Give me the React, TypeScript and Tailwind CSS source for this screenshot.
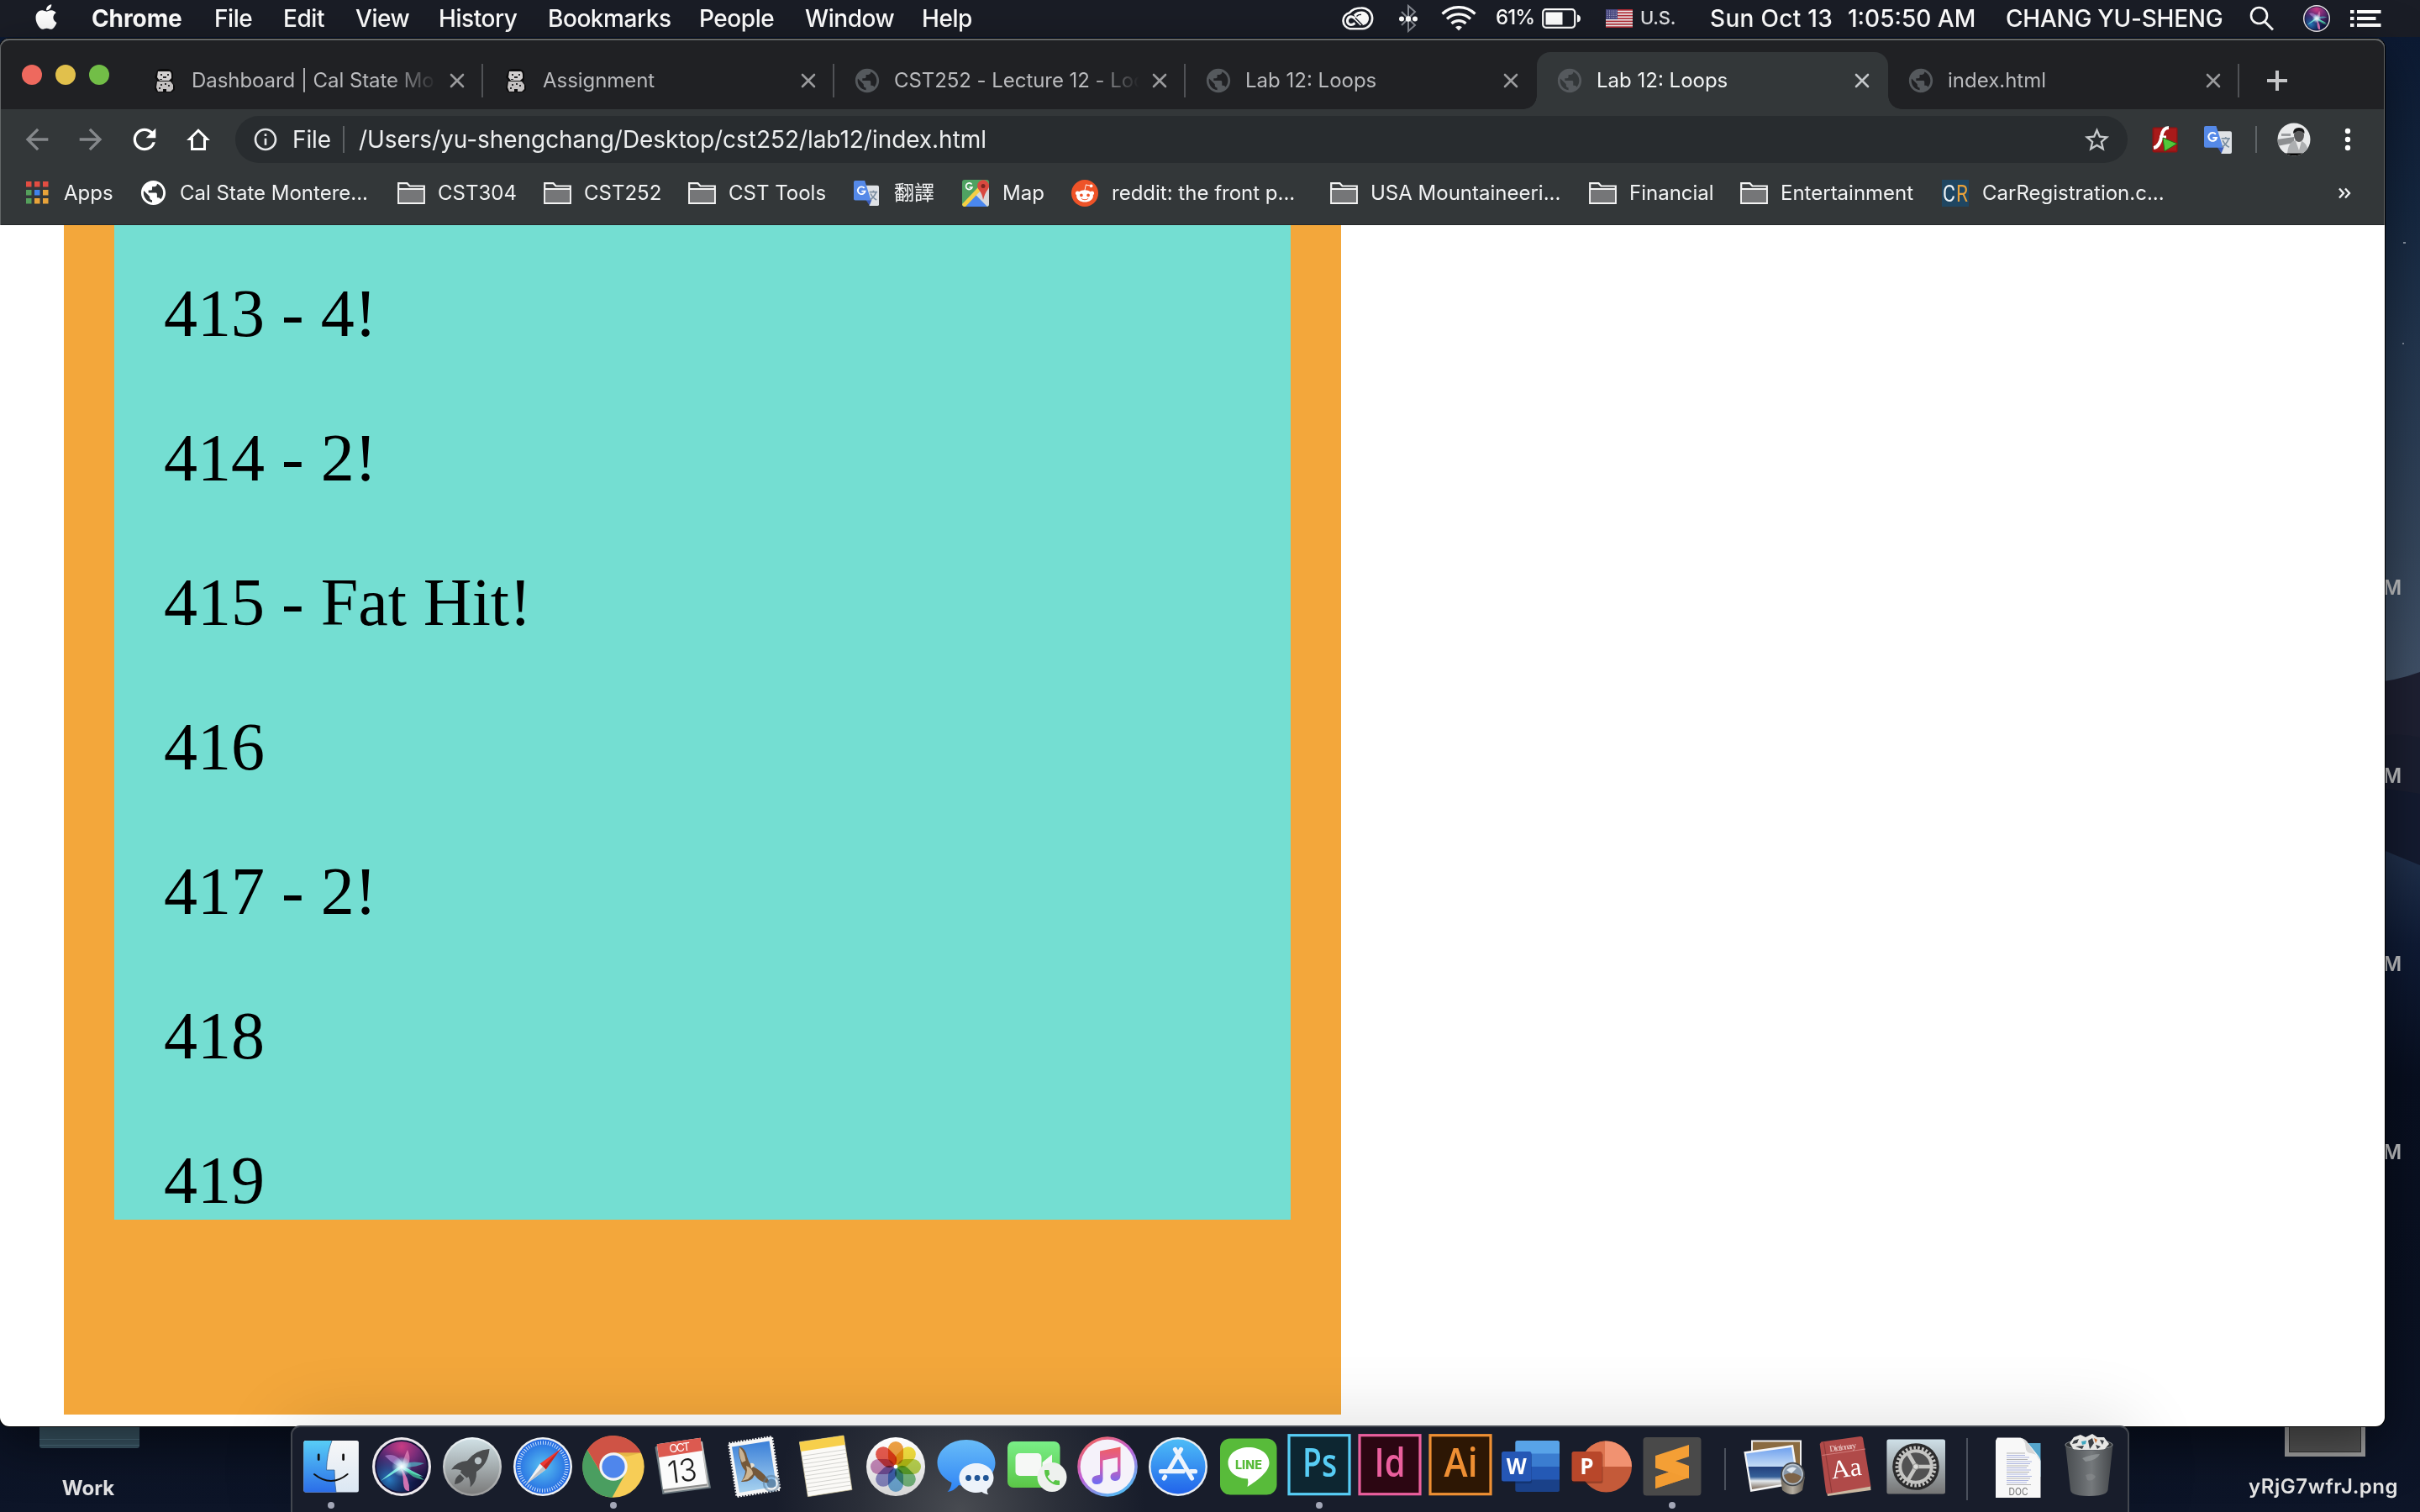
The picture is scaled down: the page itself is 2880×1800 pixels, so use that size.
import type { ReactNode } from "react";
import { FaApple, FaRedditAlien } from "react-icons/fa";
import { MdArrowBack, MdArrowForward, MdPublic, MdRefresh, MdInfoOutline, MdStarBorder, MdPhone } from "react-icons/md";

/* ---------- Menu bar ---------- */

const menus = [
  { label: "Chrome", cls: "w-[146px] font-bold tracking-[-0.1px]" },
  { label: "File", cls: "w-[82px]" },
  { label: "Edit", cls: "w-[86px]" },
  { label: "View", cls: "w-[99px]" },
  { label: "History", cls: "w-[130px]" },
  { label: "Bookmarks", cls: "w-[180px]" },
  { label: "People", cls: "w-[126px]" },
  { label: "Window", cls: "w-[139px]" },
  { label: "Help", cls: "w-[80px]" },
];

function Flag() {
  return (
    <svg width="32" height="22" viewBox="0 0 32 22">
      <rect width="32" height="22" fill="#f3f1f2" />
      {[0, 1, 2, 3, 4, 5, 6].map((i) => (
        <rect key={i} y={i * 3.39} width="32" height="1.7" fill="#b32b35" />
      ))}
      <rect width="14" height="12" fill="#46467f" />
      {[2, 4.6, 7.2, 9.8].map((y) =>
        [2, 4.6, 7.2, 9.8, 12.2].map((x) => <circle key={`${x}-${y}`} cx={x} cy={y} r="0.6" fill="#d8d8ea" />),
      )}
    </svg>
  );
}

function SiriOrb({ size }: { size: number }) {
  return (
    <svg width={size} height={size} viewBox="-35 -35 70 70">
      <SiriArt id={`siri${size}`} />
    </svg>
  );
}

function SiriArt({ id }: { id: string }) {
  return (
    <g>
      <defs>
        <radialGradient id={`${id}a`} cx="0.5" cy="0.1" r="0.75">
          <stop offset="0" stopColor="#c83c84" />
          <stop offset="0.45" stopColor="#732c78" />
          <stop offset="1" stopColor="#10143e" />
        </radialGradient>
        <radialGradient id={`${id}b`} cx="0.25" cy="0.75" r="0.6">
          <stop offset="0" stopColor="#2a7fc4" />
          <stop offset="1" stopColor="#14246a" stopOpacity="0" />
        </radialGradient>
        <radialGradient id={`${id}c`}>
          <stop offset="0" stopColor="#fff" />
          <stop offset="0.4" stopColor="#d9fbff" stopOpacity="0.8" />
          <stop offset="1" stopColor="#9ef" stopOpacity="0" />
        </radialGradient>
      </defs>
      <circle r="35" fill="#ece8ec" />
      <circle r="31.8" fill="#120f34" />
      <circle r="30" fill={`url(#${id}a)`} />
      <circle r="30" fill={`url(#${id}b)`} />
      <path d="M-25 17 Q-10 4 0 -2 Q10 4 26 12 Q8 8 0 2 Q-12 10 -25 17Z" fill="#7cf3e2" opacity="0.9" />
      <path d="M0 -2 Q12 -8 27 -4 Q14 2 0 0Z" fill="#4fb8c8" opacity="0.7" />
      <path d="M-2 0 Q10 14 9 29 Q3 30 2 20 Q2 8 -2 0Z" fill="#f07fc0" opacity="0.85" />
      <path d="M-20 -13 Q-4 -18 4 2 Q-8 0 -20 -13Z" fill="#c79be8" opacity="0.55" />
      <path d="M7 -20 Q13 -6 4 2 Q-2 -2 7 -20Z" fill="#f59ac8" opacity="0.6" />
      <path d="M2 2 Q14 4 27 16 Q12 14 2 2Z" fill="#43d6a0" opacity="0.7" />
      <circle r="12" fill={`url(#${id}c)`} />
    </g>
  );
}

function MenuBar() {
  return (
    <header className="flex h-11 w-full items-center bg-[#1a1d26] pl-[41px] text-[28px] font-medium tracking-[-0.45px] text-white">
      <div className="flex w-[68px] pb-1">
        <FaApple className="h-[34px] w-[28px] text-white" />
      </div>
      {menus.map((m) => (
        <div key={m.label} className={m.cls}>
          {m.label}
        </div>
      ))}
      <div className="ml-[418px] flex w-[69px]">
        <svg width="40" height="28" viewBox="0 0 40 28" fill="none" stroke="#fff">
          <path d="M11.500 26.200 A9.700 9.700 0 0 1 11 7.200 C14.500 2.800 19 1.500 25 1.500 A12.300 12.300 0 0 1 26.500 26.200 Z" strokeWidth="2.600" />
          <path d="M17.500 19.500 C15 21.500 12 21.800 10 20.500 A5.200 5.200 0 0 1 12.500 11.700 C15 11.500 16.500 13 18.500 15 L25 21.500" strokeWidth="3" />
          <path d="M16 9.500 C19 6.300 22 5.500 25 5.500 A8.300 8.300 0 0 1 26.500 22.200 L20 15.500 C18.500 13.500 17.500 11.500 16 9.500Z" fill="#fff" stroke="none" />
          <path d="M19.500 11.500 Q22 8.800 25 9.500 M18 13.300 L26.500 22" stroke="#1a1d26" strokeWidth="1.300" />
        </svg>
      </div>
      <div className="flex w-[51px]">
        <svg width="24" height="34" viewBox="0 0 24 34" fill="none">
          <path d="M4 9 L20 25 L12 32 V2 L20 9 L4 25" stroke="#868a92" strokeWidth="2" />
          <circle cx="4" cy="17.500" r="3" fill="#fff" />
          <circle cx="12" cy="17.500" r="3.200" fill="#fff" />
          <circle cx="20" cy="17.500" r="3" fill="#fff" />
        </svg>
      </div>
      <div className="flex w-[65px]">
        <svg width="42" height="30" viewBox="0 0 42 30" fill="none" stroke="#fff" strokeWidth="3.200">
          <path d="M1.500 9.500 A28 28 0 0 1 40.500 9.500" />
          <path d="M7 15.500 A20 20 0 0 1 35 15.500" />
          <path d="M12.500 21 A12.500 12.500 0 0 1 29.500 21" />
          <path d="M21 29.500 L17 25.300 A6 6 0 0 1 25 25.300 Z" fill="#fff" stroke="none" />
        </svg>
      </div>
      <div className="w-[55px] pb-[2px] text-[24px] tracking-[-0.9px]">61%</div>
      <div className="flex w-[76px]">
        <svg width="47" height="24" viewBox="0 0 47 24">
          <rect x="1.200" y="1.200" width="38" height="21.600" rx="3.500" fill="none" stroke="#fff" strokeWidth="2.200" />
          <rect x="4.500" y="4.500" width="20" height="15" fill="#fff" />
          <path d="M42 7.500 Q46 8 46 12 Q46 16 42 16.500Z" fill="#fff" />
        </svg>
      </div>
      <div className="flex w-[41px]">
        <Flag />
      </div>
      <div className="w-[83px] pb-px text-[22px] tracking-[-0.2px] text-[#dfe0e3]">U.S.</div>
      <div className="w-[164px] whitespace-nowrap tracking-[0.3px]">Sun Oct 13</div>
      <div className="w-[188px] whitespace-nowrap tracking-normal">1:05:50 AM</div>
      <div className="w-[290px] whitespace-nowrap tracking-[-0.25px]">CHANG YU-SHENG</div>
      <div className="flex w-[64px]">
        <svg width="30" height="30" viewBox="0 0 30 30" fill="none" stroke="#fff">
          <circle cx="11.500" cy="11.500" r="9.500" strokeWidth="2.600" />
          <path d="M18 18.500 L28 28.500" strokeWidth="3" />
        </svg>
      </div>
      <div className="flex w-[56px]">
        <SiriOrb size={32} />
      </div>
      <svg width="37" height="22" viewBox="0 0 37 22" fill="#fff">
        <rect y="1" width="4.500" height="4" />
        <rect x="8" y="1" width="28.500" height="4" />
        <rect y="9" width="4.500" height="4" />
        <rect x="8" y="9" width="22.500" height="4" />
        <rect y="17" width="4.500" height="4" />
        <rect x="8" y="17" width="28.500" height="4" />
      </svg>
    </header>
  );
}

/* ---------- Browser window ---------- */

function Otter() {
  return (
    <svg width="28" height="28" viewBox="0 0 28 28">
      <path d="M5 2 Q6 0 10 0 H18 Q23 1 24 5 V12 L23 16 L26 20 V25 L22 28 H5 L2 24 L3 17 L5 14 L2 10Z" fill="#0c0c0d" />
      <path d="M6 3 H20 Q22 4 22 8 V11 L19 14 H8 L5 10Z" fill="#d3d0d0" />
      <path d="M5 15 H21 L24 19 V24 L21 27 H16 V24 H12 V27 H6 L4 22Z" fill="#c4c1c1" />
      <path d="M9 6 h2 v2 h-2z M17 6 h2 v2 h-2z M12 9 h4 v2 h-4z M8 12 h3 v1 h-3z M9 18 h2 v2 h-2z M14 17 h2 v2 h-2z M18 19 h2 v2 h-2z M7 22 h2 v2 h-2z" fill="#29292b" />
    </svg>
  );
}

function CloseX({ active }: { active?: boolean }) {
  return (
    <svg width="18" height="18" viewBox="0 0 18 18" stroke={active ? "#c3c6c9" : "#9a9b9d"} strokeWidth="2.600" strokeLinecap="round">
      <path d="M2 2 L16 16 M16 2 L2 16" />
    </svg>
  );
}

const fade = " [mask-image:linear-gradient(to_right,#000_235px,transparent_292px)]";

const tabs = [
  { title: "Dashboard | Cal State Mo", icon: "otter", cls: "tracking-[-0.06px]" + fade },
  { title: "Assignment", icon: "otter", cls: "tracking-[-0.05px]" },
  { title: "CST252 - Lecture 12 - Loo", icon: "globe", cls: "tracking-[-0.06px]" + fade },
  { title: "Lab 12: Loops", icon: "globe", cls: "" },
  { title: "Lab 12: Loops", icon: "globe", cls: "text-[#f1f3f4]", active: true },
  { title: "index.html", icon: "globe", cls: "" },
];

function TabStrip() {
  return (
    <div className="flex h-[84px] w-full items-end bg-[#202124] text-[24px] text-[#b9babd]">
      <div className="flex h-[84px] w-[157px] items-start gap-4 pl-[26px] pt-[31px]">
        <span className="h-6 w-6 rounded-full bg-[#ee695e]" />
        <span className="h-6 w-6 rounded-full bg-[#e1c04c]" />
        <span className="h-6 w-6 rounded-full bg-[#72be47]" />
      </div>
      {tabs.map((t, i) => (
        <div
          key={i}
          className={
            t.active
              ? "relative flex h-[68px] w-[418px] items-center rounded-t-[16px] bg-[#333739]"
              : "relative flex h-[68px] w-[418px] items-center"
          }
        >
          {t.active && (
            <>
              <span className="absolute -left-4 bottom-0 h-4 w-4 bg-[radial-gradient(circle_at_0_0,transparent_15.5px,#333739_16px)]" />
              <span className="absolute -right-4 bottom-0 h-4 w-4 bg-[radial-gradient(circle_at_100%_0,transparent_15.5px,#333739_16px)]" />
            </>
          )}
          <div className="flex w-[71px] justify-start pl-[22px]">
            {t.icon === "otter" ? <div className="pl-[3px]"><Otter /></div> : <MdPublic className="h-[34px] w-[34px] text-[#55595d]" />}
          </div>
          <div className={"w-[307px] overflow-hidden whitespace-nowrap pb-px " + t.cls}>{t.title}</div>
          <CloseX active={t.active} />
          {!t.active && i !== 3 && <span className="ml-[20px] h-10 w-[2px] bg-[#505256]" />}
        </div>
      ))}
      <div className="flex h-[68px] w-[90px] items-center justify-center">
        <svg width="24" height="24" viewBox="0 0 24 24" stroke="#c4c5c7" strokeWidth="4">
          <path d="M12 0 V24 M0 12 H24" />
        </svg>
      </div>
    </div>
  );
}

function Translate({ size }: { size: number }) {
  return (
    <svg width={size} height={size} viewBox="0 0 32 32">
      <path d="M12 6 H30 Q32 6 32 8 V30 Q32 32 30 32 H20Z" fill="#dfe2e6" />
      <path d="M15 24 H23 L20 31.500Z" fill="#3a5bb8" />
      <path d="M2 0 H14 L22 25 H2 Q0 25 0 23 V2 Q0 0 2 0Z" fill="#5589e8" />
      <path d="M13.500 9.500 A4.700 4.700 0 1 0 14.500 13.500 H10" fill="none" stroke="#fff" strokeWidth="2" />
      <path d="M20 14.500 H30 M25 12.500 V14.500 M28.500 14.500 Q26 21 20.500 24.500 M21.500 16.500 Q24 22 29 24.500" fill="none" stroke="#7c8ea0" strokeWidth="1.700" />
    </svg>
  );
}

function Toolbar() {
  return (
    <div className="flex h-[72px] w-full items-center bg-[#333739] pl-6 text-[28px] text-[#eceeef]">
      <div className="flex w-[64px]"><MdArrowBack className="h-10 w-10 text-[#85888b]" /></div>
      <div className="flex w-[64px]"><MdArrowForward className="h-10 w-10 text-[#85888b]" /></div>
      <div className="flex w-[70px]"><MdRefresh className="h-10 w-10 text-white" /></div>
      <div className="flex w-[58px]">
        <svg width="28" height="28" viewBox="0 0 28 28" fill="none" stroke="#fff" strokeWidth="3">
          <path d="M14 3.300 L24.300 13.500 H21.500 V25.500 H6.500 V13.500 H3.700 Z" />
        </svg>
      </div>
      <div className="flex h-14 w-[2252px] items-center rounded-full bg-[#282c2f] pl-5">
        <div className="flex w-[48px]"><MdInfoOutline className="h-8 w-8 text-[#e4e6e8]" /></div>
        <div className="w-[60px] tracking-[-0.1px]">File</div>
        <div className="mr-[17px] h-8 w-[2px] bg-[#5d6164]" />
        <div className="w-[2051px] whitespace-nowrap tracking-[-0.05px]">/Users/yu-shengchang/Desktop/cst252/lab12/index.html</div>
        <MdStarBorder className="h-[35px] w-[35px] text-[#c6c9cb]" />
      </div>
      <div className="ml-[29px] flex w-[62px]">
        <svg width="32" height="32" viewBox="0 0 32 32">
          <rect x="0.500" y="1.500" width="30" height="30" rx="2" fill="#8f1414" />
          <rect x="2.500" y="3" width="26.500" height="26.500" fill="#a81a1a" />
          <path d="M20 2 Q13 2 11.500 12 Q9 25 2 26" fill="none" stroke="#fff" strokeWidth="4" />
          <path d="M9 13 H17" stroke="#fff" strokeWidth="3" />
          <path d="M13 14 L30 21 L15 30Z" fill="#52c83a" stroke="#1f6d13" strokeWidth="1" />
        </svg>
      </div>
      <div className="flex w-[61px]"><Translate size={33} /></div>
      <div className="h-8 w-[2px] bg-[#5f6467]" />
      <div className="ml-[24px] flex w-[80px]">
        <svg width="40" height="40" viewBox="0 0 40 40">
          <defs><clipPath id="avatar"><circle cx="20" cy="20" r="19.500" /></clipPath></defs>
          <g clipPath="url(#avatar)">
            <rect width="40" height="40" fill="#e9eaeb" />
            <path d="M0 20 L20 17 V24 L0 28Z" fill="#8d8f91" />
            <path d="M5 13 h11 v3 h-11z" fill="#9c9ea0" />
            <path d="M12 40 Q12 22 23 21 Q35 21 37 34 V40Z" fill="#adafb1" />
            <path d="M22 22 L26 33 L29 22Z" fill="#ebebeb" />
            <ellipse cx="26" cy="15" rx="6" ry="8" fill="#5c5c5d" />
            <path d="M19 13 Q19 6 26 6 Q33 6 32.500 13 Q29 9 24 10Z" fill="#161617" />
            <rect y="36.500" width="40" height="4" fill="#060606" />
          </g>
        </svg>
      </div>
      <svg width="8" height="28" viewBox="0 0 8 28" fill="#fff">
        <circle cx="4" cy="4" r="3.200" /><circle cx="4" cy="14" r="3.200" /><circle cx="4" cy="24" r="3.200" />
      </svg>
    </div>
  );
}

function Folder() {
  return (
    <svg width="33" height="26" viewBox="0 0 33 26">
      <path d="M1.200 24.800 V1.200 H11.500 L14.500 4.500 H31.800 V24.800Z" fill="#3b3e40" stroke="#f4f4f4" strokeWidth="2.200" />
      <path d="M2 8.500 H31 V24 H2Z" fill="#757678" />
      <path d="M1 8 H32" stroke="#f4f4f4" strokeWidth="1.800" />
    </svg>
  );
}

function AppsIcon() {
  const c = ["#e24d42", "#e24d42", "#e24d42", "#55a05c", "#3f83ec", "#e8a33a", "#55a05c", "#e8a33a", "#e8a33a"];
  return (
    <svg width="27" height="27" viewBox="0 0 27 27">
      {c.map((f, i) => (
        <rect key={i} x={(i % 3) * 10} y={Math.floor(i / 3) * 10} width="6.500" height="6.500" fill={f} />
      ))}
    </svg>
  );
}

function MapsIcon() {
  return (
    <svg width="32" height="32" viewBox="0 0 32 32">
      <rect width="32" height="32" rx="3" fill="#4fa262" />
      <path d="M32 8 V29 Q32 32 29 32 L15 17 L24 8Z" fill="#d8d8d8" />
      <path d="M4 32 L16 18 L30 32Z" fill="#4a87ee" />
      <path d="M0 29 L19 9 L22 13 L4 32 H2 Q0 31 0 29Z" fill="#f4cf45" />
      <path d="M25 24 Q24 17 20 12 A7 7 0 1 1 31 11 Q27 16 25 24Z" fill="#d9493f" />
      <circle cx="25" cy="7.500" r="2.500" fill="#7d2620" />
      <path d="M11.500 5.500 A3.800 3.800 0 1 0 12 9 H8.500" fill="none" stroke="#fff" strokeWidth="1.700" />
    </svg>
  );
}

function CarReg() {
  return (
    <svg width="32" height="32" viewBox="0 0 32 32">
      <rect width="32" height="32" fill="#1f4662" />
      <text x="1" y="26" fontSize="28" fontFamily="Roboto" fill="#eef3f6" textLength="15" lengthAdjust="spacingAndGlyphs">C</text>
      <text x="17" y="26" fontSize="28" fontFamily="Roboto" fill="#e9a13a" textLength="14" lengthAdjust="spacingAndGlyphs">R</text>
    </svg>
  );
}

const bookmarks: { icon: ReactNode; label: string; box: string; iconBox: string }[] = [
  { icon: <AppsIcon />, label: "Apps", box: "w-[134px]", iconBox: "w-[45px]" },
  { icon: <MdPublic className="h-[35px] w-[35px] text-white" />, label: "Cal State Montere...", box: "w-[308px]", iconBox: "w-[49px]" },
  { icon: <Folder />, label: "CST304", box: "w-[174px]", iconBox: "w-[48px]" },
  { icon: <Folder />, label: "CST252", box: "w-[172px]", iconBox: "w-[48px]" },
  { icon: <Folder />, label: "CST Tools", box: "w-[197px]", iconBox: "w-[48px]" },
  { icon: <Translate size={30} />, label: "翻譯", box: "w-[129px]", iconBox: "w-[48px]" },
  { icon: <MapsIcon />, label: "Map", box: "w-[130px]", iconBox: "w-[48px]" },
  {
    icon: (
      <span className="flex h-8 w-8 items-center justify-center rounded-full bg-[#ee5328]">
        <FaRedditAlien className="h-6 w-6 text-white" />
      </span>
    ),
    label: "reddit: the front p...",
    box: "w-[308px]",
    iconBox: "w-[48px]",
  },
  { icon: <Folder />, label: "USA Mountaineeri...", box: "w-[308px]", iconBox: "w-[48px]" },
  { icon: <Folder />, label: "Financial", box: "w-[180px]", iconBox: "w-[48px]" },
  { icon: <Folder />, label: "Entertainment", box: "w-[240px]", iconBox: "w-[48px]" },
  { icon: <CarReg />, label: "CarRegistration.c...", box: "w-[471px]", iconBox: "w-[48px]" },
];

function BookmarksBar() {
  return (
    <div className="flex h-[66px] w-full items-center border-b border-[#25282a] bg-[#333739] pb-[10px] pl-[31px] text-[24px] text-[#f1f2f3]">
      {bookmarks.map((b, i) => (
        <div key={i} className={"flex items-center whitespace-nowrap " + b.box}>
          <div className={"flex " + b.iconBox}>{b.icon}</div>
          <div>{b.label}</div>
        </div>
      ))}
      <svg width="16" height="14" viewBox="0 0 16 14" fill="none" stroke="#f1f2f3" strokeWidth="2.400">
        <path d="M2 1.500 L7 7 L2 12.500 M9 1.500 L14 7 L9 12.500" />
      </svg>
    </div>
  );
}

const lines = ["413 - 4!", "414 - 2!", "415 - Fat Hit!", "416", "417 - 2!", "418", "419"];

function BrowserWindow() {
  return (
    <main className="absolute left-0 top-[46px] flex h-[1652px] w-[2838px] flex-col overflow-hidden rounded-[11px] bg-white shadow-[0_0_0_1px_#000,0_20px_60px_rgba(0,0,0,0.5)]">
      <TabStrip />
      <Toolbar />
      <BookmarksBar />
      <section className="ml-[76px] h-[1416px] w-[1520px] bg-[#f3a73b] px-[60px]">
        <div className="flex h-[1184px] flex-col gap-[80px] bg-[#74ded2] pl-[59px] pt-[59px] font-['Liberation_Serif'] text-[80px] leading-[92px] text-black">
          {lines.map((l) => (
            <p key={l} className="whitespace-nowrap [font-kerning:none]">{l}</p>
          ))}
        </div>
      </section>
      <div className="pointer-events-none absolute left-0 top-0 h-[222px] w-full rounded-t-[11px] border-x border-t-2 border-[#636667]" />
    </main>
  );
}

/* ---------- Dock ---------- */

function Finder() {
  return (
    <g>
      <linearGradient id="fnd" x1="0" y1="0" x2="0" y2="1"><stop offset="0" stopColor="#58cdf6" /><stop offset="1" stopColor="#2b6de8" /></linearGradient>
      <linearGradient id="fnd2" x1="0" y1="0" x2="0" y2="1"><stop offset="0" stopColor="#f7f7f8" /><stop offset="1" stopColor="#dbe7f3" /></linearGradient>
      <rect x="9.400" y="17" width="65.500" height="61.500" rx="2.500" fill="url(#fnd2)" />
      <path d="M12 17 H43 Q37 32 36.500 52 H46 Q46 66 48 78.500 H12 Q9.400 78.500 9.400 76 V19.500 Q9.400 17 12 17Z" fill="url(#fnd)" />
      <path d="M43 17 Q37 32 36.500 52 H46 Q46 66 48 78.500" fill="none" stroke="#33608f" strokeWidth="0.800" />
      <path d="M27.200 34 V39.500 M56.600 34 V39.500" stroke="#111" strokeWidth="2.800" strokeLinecap="round" />
      <path d="M22 57 Q42 73 61.600 57" fill="none" stroke="#111" strokeWidth="2" strokeLinecap="round" />
    </g>
  );
}

function Launchpad() {
  return (
    <g>
      <linearGradient id="lp" x1="0" y1="0" x2="0" y2="1"><stop offset="0" stopColor="#cfdfe4" /><stop offset="1" stopColor="#7b7b7b" /></linearGradient>
      <linearGradient id="lp2" x1="0" y1="0" x2="0" y2="1"><stop offset="0" stopColor="#eef5f8" /><stop offset="1" stopColor="#989898" /></linearGradient>
      <circle cx="42" cy="48" r="35" fill="url(#lp2)" />
      <circle cx="42" cy="48" r="32.500" fill="url(#lp)" />
      <path d="M62.500 27 Q46 28 36 41 Q23 42 17 51.500 Q24 50 29 52.500 L28 55 L35.500 61.500 L37.500 60 Q40.500 66 39.600 72.500 Q47.500 66 47 54 Q61 45 62.500 27Z" fill="#4a4c4e" />
      <path d="M27.500 57 Q21.500 60 21 69 Q29 68 32.500 62Z" fill="#4a4c4e" />
      <circle cx="49" cy="41" r="4.200" fill="#b9c3c7" />
    </g>
  );
}

function Safari() {
  return (
    <g>
      <radialGradient id="sf"><stop offset="0" stopColor="#58c2f2" /><stop offset="1" stopColor="#2368e0" /></radialGradient>
      <circle cx="42" cy="48" r="35" fill="#eef0f2" />
      <circle cx="42" cy="48" r="32.500" fill="url(#sf)" />
      <circle cx="42" cy="48" r="28.500" fill="none" stroke="#dcecff" strokeWidth="4.500" strokeDasharray="0.900 2.080" />
      <path d="M63 27 L38.500 44.500 L45.500 51.500Z" fill="#ee3a34" />
      <path d="M63 27 L42 48 L45.500 51.500Z" fill="#c42823" />
      <path d="M22 69 L38.500 44.500 L45.500 51.500Z" fill="#f2f2f2" />
      <path d="M22 69 L42 48 L45.500 51.500Z" fill="#bfc3c8" />
    </g>
  );
}

function Chrome() {
  return (
    <g>
      <circle cx="42" cy="48" r="36.700" fill="#f7cd56" />
      <path d="M42 48 L56.300 56.250 L40.500 84.650 A36.700 36.700 0 0 1 11 28 L27.700 56.250Z" fill="#4a9e60" />
      <path d="M42 31.500 L74.800 31.500 A36.700 36.700 0 0 0 11 28 L27.700 56.250 L42 48Z" fill="#cf5345" />
      <path d="M42 31.500 H74.800 L58 36Z" fill="#d9a83c" opacity="0.600" />
      <circle cx="42" cy="48" r="16.700" fill="#f4f4f4" />
      <circle cx="42" cy="48" r="13.600" fill="#4f86ec" />
    </g>
  );
}

function Calendar() {
  return (
    <g>
      <path d="M7.500 25 L12 21 L65 25 L74 73.500 L16.500 81Z" fill="#6d7a80" />
      <path d="M12 26 L64 18 L71.500 72 L18.500 79Z" fill="#c9c9c7" />
      <path d="M10 24 L62 16 L70 70.500 L17.500 77Z" fill="#8b8b8a" />
      <path d="M9.800 21.300 L61.600 13.700 L69.400 68.500 L17 75Z" fill="#fbfbfb" />
      <path d="M9.800 21.300 L61.600 13.700 L63.800 29 L12 37Z" fill="#dc5a50" />
      <text transform="translate(37.500 30) rotate(-7)" textAnchor="middle" fontSize="13.500" fontFamily="Inter" fill="#fff" textLength="25">OCT</text>
      <text transform="translate(41.500 66) rotate(-7)" textAnchor="middle" fontSize="37" fontWeight="300" fontFamily="Inter" fill="#1d1d1d" textLength="35" lengthAdjust="spacingAndGlyphs">13</text>
    </g>
  );
}

function Mail() {
  return (
    <g>
      <linearGradient id="ml" x1="0" y1="0" x2="0" y2="1"><stop offset="0" stopColor="#3a7fd8" /><stop offset="1" stopColor="#a9d3ef" /></linearGradient>
      <path d="M11.500 20.500 L62.500 12.500 L72 75.500 L21 83.500Z" fill="#f6f6f6" stroke="#f6f6f6" strokeWidth="3" strokeDasharray="1.800 1.700" />
      <path d="M15 24.500 L59.500 17.500 L68 71.500 L24 79Z" fill="url(#ml)" />
      <path d="M24 24 Q31 26 33 36 Q35 43 38 47 Q50 52 58 63 Q61 68 55 67 Q48 66 42 58 Q38 67 26 66 Q31 59 31 53 Q26 48 25 40 Q22 32 24 24Z" fill="#74583a" />
      <path d="M24 25 Q30 30 31.500 41 L27 43 Q23 35 24 25Z" fill="#c9b293" />
      <path d="M32 47 Q40 50 40 57 L34 63 L27 65 Q35 56 32 47Z" fill="#cdb593" />
      <path d="M37 44 Q41 43 42 47 L38 50Z" fill="#e9e0d0" />
      <circle cx="62" cy="68" r="9" fill="none" stroke="#5b7a96" strokeWidth="2.500" opacity="0.550" />
      <circle cx="62" cy="68" r="5.500" fill="#4b6f92" opacity="0.700" />
    </g>
  );
}

function Notes() {
  return (
    <g>
      <path d="M11.400 18.700 L64 11 L74 75.500 L21.400 83.700Z" fill="#fbfaf7" stroke="#c9bf96" strokeWidth="0.700" />
      <path d="M11.400 18.700 L64 11 L65.600 22 L13 30Z" fill="#f7cf4b" />
      {[0, 1, 2, 3, 4, 5, 6, 7, 8, 9].map((i) => (
        <path key={i} d={`M${14 + i * 0.75} ${35.500 + i * 4.700} L${66.300 + i * 0.750} ${27.700 + i * 4.700}`} stroke="#cfcfcc" strokeWidth="0.900" />
      ))}
    </g>
  );
}

function Photos() {
  const c = ["#f0a243", "#f3df3f", "#bcd651", "#7cc184", "#74b3e2", "#8f8fcc", "#c98bbd", "#e95b4f"];
  return (
    <g>
      <linearGradient id="ph" x1="0" y1="0" x2="0" y2="1"><stop offset="0" stopColor="#fff" /><stop offset="1" stopColor="#d5d5d5" /></linearGradient>
      <circle cx="42" cy="48" r="35" fill="url(#ph)" />
      {c.map((f, i) => (
        <rect key={f} x="-9" y="-30" width="18" height="28" rx="9" fill={f} transform={`translate(42 48) rotate(${i * 45})`} className="mix-blend-multiply" />
      ))}
      <circle cx="42" cy="48" r="2.200" fill="#fff" />
    </g>
  );
}

function Messages() {
  return (
    <g>
      <linearGradient id="ms" x1="0" y1="0" x2="0" y2="1"><stop offset="0" stopColor="#68bcf8" /><stop offset="1" stopColor="#2f84f5" /></linearGradient>
      <path d="M42 16 C61 16 76.500 28 76.500 43.500 C76.500 59 61 71 42 71 Q37 71 33 70 Q27 77.500 19.500 78 Q24 74 24.500 67 C14 62 7.500 53 7.500 43.500 C7.500 28 23 16 42 16Z" fill="url(#ms)" />
      <path d="M54 44 C65 44 74.500 51 74.500 61.500 Q74.500 69 67 75 Q66 79 68.500 81 Q63 80.500 60.500 78 Q57 79 54 79 C43 79 33.500 72 33.500 61.500 C33.500 51 43 44 54 44Z" fill="#edf3fa" />
      <circle cx="44.500" cy="61.500" r="3.400" fill="#1f5596" /><circle cx="55" cy="61.500" r="3.400" fill="#1f5596" /><circle cx="65.300" cy="61.500" r="3.400" fill="#1f5596" />
    </g>
  );
}

function FaceTime() {
  return (
    <g>
      <linearGradient id="ft" x1="0" y1="0" x2="0" y2="1"><stop offset="0" stopColor="#79ee87" /><stop offset="1" stopColor="#5bc747" /></linearGradient>
      <rect x="7" y="18" width="62.500" height="55" rx="7" fill="url(#ft)" />
      <rect x="16.500" y="32" width="31" height="27" rx="5" fill="#f6f8f6" />
      <path d="M48.500 43 L60 33.500 V57.500 L48.500 48Z" fill="#f6f8f6" />
      <circle cx="60" cy="60.500" r="17.500" fill="#eef1ee" />
      <g transform="translate(48 49)"><MdPhone size={24} color="#57c545" /></g>
    </g>
  );
}

function ITunes() {
  return (
    <g>
      <linearGradient id="it" x1="0.200" y1="0" x2="0.800" y2="1"><stop offset="0" stopColor="#f5655a" /><stop offset="0.450" stopColor="#c060d8" /><stop offset="1" stopColor="#45c8f8" /></linearGradient>
      <linearGradient id="it2" x1="0" y1="0" x2="0" y2="1"><stop offset="0" stopColor="#ef5f60" /><stop offset="0.500" stopColor="#d65cb0" /><stop offset="1" stopColor="#6a6cf5" /></linearGradient>
      <circle cx="42" cy="48" r="35.800" fill="url(#it)" />
      <circle cx="42" cy="48" r="32.300" fill="#f5f2fa" />
      <path d="M33 29.500 L57.500 24.500 V58 Q57.500 65 51 65 Q45.500 64.500 45.500 60 Q45.500 55.500 51 54.500 L54 53.800 V37 L36.500 40.500 V62.500 Q36.500 69 29.500 69 Q23.500 69 23.500 64 Q23.500 59.500 29 58.500 L33 57.800Z" fill="url(#it2)" />
    </g>
  );
}

function AppStore() {
  return (
    <g>
      <linearGradient id="as" x1="0" y1="0" x2="0" y2="1"><stop offset="0" stopColor="#4dbcf7" /><stop offset="1" stopColor="#2163ea" /></linearGradient>
      <circle cx="42" cy="48" r="35" fill="#e9edf2" />
      <circle cx="42" cy="48" r="32.500" fill="url(#as)" />
      <g stroke="#eef4fc" strokeWidth="5.200" strokeLinecap="round">
        <path d="M45.500 27.500 L30.500 53.500 M38.500 27.500 L58.500 62 M26.500 60 L25.300 62 M21.500 53.700 H48 M57 53.700 H62.500" />
      </g>
    </g>
  );
}

function Line() {
  return (
    <g>
      <rect x="8" y="14.500" width="67.500" height="67" rx="12" fill="#58bb3a" />
      <path d="M42 25 C56 25 66.500 33 66.500 43.500 C66.500 54 53 64 40.500 72 Q42 67 41 62.500 C27 62 17.500 54 17.500 43.500 C17.500 33 28 25 42 25Z" fill="#fff" />
      <text x="42" y="50.500" textAnchor="middle" fontFamily="Inter" fontSize="15" fontWeight="800" fill="#58bb3a" textLength="32" lengthAdjust="spacingAndGlyphs">LINE</text>
    </g>
  );
}

function Adobe({ t, fg, bg, w, cx }: { t: string; fg: string; bg: string; w: number; cx: number }) {
  return (
    <g>
      <rect x="6" y="10.700" width="72" height="70" fill={bg} stroke={fg} strokeWidth="3.200" />
      <text x={cx} y="60" textAnchor="middle" fontFamily="Open Sans" fontWeight="600" fontSize="47" fill={fg} textLength={w} lengthAdjust="spacingAndGlyphs">{t}</text>
    </g>
  );
}

function Word() {
  return (
    <g>
      <clipPath id="wd"><rect x="23.300" y="17" width="52.700" height="61" rx="2.500" /></clipPath>
      <g clipPath="url(#wd)">
        <rect x="23" y="17" width="54" height="16" fill="#58a3e8" /><rect x="23" y="32.500" width="54" height="16" fill="#3b7dd0" />
        <rect x="23" y="48" width="54" height="16" fill="#2459b5" /><rect x="23" y="63.500" width="54" height="16" fill="#1a4189" />
      </g>
      <rect x="7" y="32" width="36" height="36" rx="2.500" fill="#0a1c44" opacity="0.350" />
      <rect x="7" y="30" width="35.500" height="35.500" rx="2.500" fill="#2557b5" />
      <text x="24.700" y="57" textAnchor="middle" fontFamily="Open Sans" fontWeight="700" fontSize="26" fill="#fff" textLength="24" lengthAdjust="spacingAndGlyphs">W</text>
    </g>
  );
}

function PowerPoint() {
  return (
    <g>
      <circle cx="47.500" cy="48" r="30.500" fill="#c45a39" />
      <path d="M46 17.500 A30.500 30.500 0 0 0 17 48 H46Z" fill="#dd7450" />
      <path d="M46 17.500 A30.500 30.500 0 0 1 78 48 H46Z" fill="#f19271" />
      <rect x="7" y="32" width="36.500" height="36" rx="2.500" fill="#4a150a" opacity="0.350" />
      <rect x="6.500" y="30" width="36" height="35.500" rx="2.500" fill="#b8472a" />
      <text x="24.500" y="57" textAnchor="middle" fontFamily="Open Sans" fontWeight="700" fontSize="26" fill="#fff">P</text>
    </g>
  );
}

function Sublime() {
  return (
    <g>
      <rect x="7.500" y="13" width="69" height="69.500" rx="4" fill="#494949" />
      <path d="M22 47 L62 60 V61 L22 74 V60 L38 54.500Z" fill="#e08f2b" />
      <path d="M38 54.500 L22 60 V74 L62 61Z" fill="#f29c32" />
      <path d="M62 22 L22 35 V49.500 L62 62 V47 L46 41.300 L62 36Z" fill="#f49f35" />
    </g>
  );
}

function Preview() {
  return (
    <g>
      <linearGradient id="pv" x1="0" y1="0" x2="0" y2="1"><stop offset="0" stopColor="#6ea0ee" /><stop offset="0.450" stopColor="#c3dbf6" /><stop offset="0.460" stopColor="#23407c" /><stop offset="0.700" stopColor="#355f98" /><stop offset="0.800" stopColor="#e4eaee" /><stop offset="1" stopColor="#7c6a5a" /></linearGradient>
      <linearGradient id="pv2"><stop offset="0" stopColor="#6c6559" /><stop offset="0.500" stopColor="#b5aea2" /><stop offset="1" stopColor="#5f574c" /></linearGradient>
      <rect x="15" y="17.500" width="58" height="45" fill="#8a6b41" stroke="#efefef" strokeWidth="2" />
      <path d="M5.400 30.300 L64 22 L71 68 L13.200 78Z" fill="#f7f7f7" />
      <path d="M8 32.500 L62 25 L68.500 66 L15 75Z" fill="url(#pv)" />
      <path d="M49 60 L51 76 Q63 86 75 76 L78 60Z" fill="url(#pv2)" />
      <circle cx="63.500" cy="57" r="14.300" fill="#43464a" />
      <circle cx="63.500" cy="57" r="12.500" fill="#b9c3cc" />
      <circle cx="63.500" cy="57" r="10.800" fill="#8898aa" />
      <path d="M53 58 Q63 52 74 60 Q71 67.500 63.500 67.800 Q55 67 53 58Z" fill="#7d6348" />
      <path d="M56 52 Q62 46 68 50 L62 56Z" fill="#dfe8f0" />
    </g>
  );
}

function Dictionary() {
  return (
    <g>
      <path d="M20 78 L72 70 L72.500 76 L21 83Z" fill="#cbb9a2" />
      <path d="M13.500 18.500 L60 12 Q62.400 12 63 14 L72.500 71.500 L21 80.500 Q19.500 80 19 78 L11.700 21Z" fill="#b04a49" />
      <path d="M16.500 19 L26 79" stroke="#8e3938" strokeWidth="1.200" />
      <path d="M14.500 34.500 L66 27" stroke="#d98a88" strokeWidth="0.800" />
      <text transform="translate(39.500 28) rotate(-8)" textAnchor="middle" fontFamily="Liberation Serif" fontSize="10" fill="#f0d5d2" textLength="32">Dictionary</text>
      <text transform="translate(44.500 60) rotate(-8)" textAnchor="middle" fontFamily="Liberation Serif" fontSize="31" fill="#fff">Aa</text>
    </g>
  );
}

function Settings() {
  return (
    <g>
      <linearGradient id="sp" x1="0" y1="0" x2="0" y2="1"><stop offset="0" stopColor="#cfe0e8" /><stop offset="1" stopColor="#747474" /></linearGradient>
      <rect x="7.400" y="15.500" width="69.600" height="65" rx="2.500" fill="url(#sp)" />
      <circle cx="42" cy="48" r="27.800" fill="#2b2b2c" />
      <circle cx="42" cy="48" r="22.500" fill="none" stroke="#c5c5c3" strokeWidth="4" strokeDasharray="2.600 2.290" />
      <circle cx="42" cy="48" r="18.800" fill="#515152" stroke="#c5c5c3" strokeWidth="4" />
      <path d="M42 48 H60 M42 48 L33 32.500 M42 48 L33 63.500" stroke="#c5c5c3" strokeWidth="4.500" />
      <circle cx="42" cy="48" r="3.400" fill="#dcdcda" stroke="#8c8c8a" />
    </g>
  );
}

function DocFile() {
  return (
    <g>
      <rect x="15" y="20" width="53.500" height="40" fill="#55a5cc" />
      <path d="M17 13.500 H42 Q48 13.500 52 18 L64 33 Q68.500 38 68.500 42 V85 H15 V17Z" fill="#f8f8f8" />
      <path d="M42 13.500 Q50 14 50.500 24 Q51 32 57 32 Q66 33 68.500 42 L52 18 Q48 13.500 42 13.500Z" fill="#d7d7d7" />
      {Array.from({ length: 16 }, (_, i) => (
        <path key={i} d={`M28 ${32 + i * 2.500} H${i < 2 ? 50 : 52 + ((i * 5) % 7)}`} stroke={i % 3 ? "#aeb6e0" : "#b4b4b4"} strokeWidth="1" />
      ))}
      <text x="42" y="81.500" textAnchor="middle" fontFamily="Inter" fontSize="11.500" fill="#6f6f6f" textLength="23" lengthAdjust="spacingAndGlyphs">DOC</text>
    </g>
  );
}

function Trash() {
  return (
    <g>
      <linearGradient id="tr"><stop offset="0" stopColor="#4b4f52" /><stop offset="0.300" stopColor="#63676a" /><stop offset="0.550" stopColor="#7a7e80" /><stop offset="1" stopColor="#46494c" /></linearGradient>
      <ellipse cx="42" cy="22" rx="28" ry="6" fill="#2f3235" stroke="#85898c" strokeWidth="1.200" />
      <path d="M19 20 L24 13 L32 10 L38 13 L46 9 L52 13 L60 13 L66 21 L60 28 H24Z" fill="#e6e6e4" />
      <path d="M24 17 L30 15 L28 20 L22 21Z M41 17 L46 14 L48 20 L43 27Z M55 16 L60 17 L58 22Z M26 24 L36 23 L34 27Z M50 22 L56 24 L52 27Z" fill="#3b3f44" />
      <path d="M33 18 L39 17 L38 21 L34 22Z" fill="#3ea8c0" />
      <path d="M48 14 L52 16 L50 20Z" fill="#c9743a" />
      <path d="M14 22 Q16 28.500 42 28.500 Q68 28.500 70.500 22 L64.500 76 Q63 83 42 83 Q21 83 20 76Z" fill="url(#tr)" opacity="0.950" />
      <path d="M34 38 Q46 33 55 33 Q52 40 38 42Z" fill="#9fa3a5" opacity="0.600" />
      <path d="M38 58 Q46 54 50 60 Q46 66 40 64Z" fill="#95999b" opacity="0.400" />
    </g>
  );
}

const apps: { art: ReactNode; dot?: boolean }[] = [
  { art: <Finder />, dot: true },
  { art: <g transform="translate(42 48)"><SiriArt id="dock" /></g> },
  { art: <Launchpad /> },
  { art: <Safari /> },
  { art: <Chrome />, dot: true },
  { art: <Calendar /> },
  { art: <Mail /> },
  { art: <Notes /> },
  { art: <Photos /> },
  { art: <Messages /> },
  { art: <FaceTime /> },
  { art: <ITunes /> },
  { art: <AppStore /> },
  { art: <Line /> },
  { art: <Adobe t="Ps" fg="#57cdf5" bg="#0d2631" w={41} cx={42.5} />, dot: true },
  { art: <Adobe t="Id" fg="#ea5f9d" bg="#2c0612" w={37} cx={42} /> },
  { art: <Adobe t="Ai" fg="#ee8f33" bg="#2d1704" w={40} cx={42.5} /> },
  { art: <Word /> },
  { art: <PowerPoint /> },
  { art: <Sublime />, dot: true },
];

function DockItem({ children, dot }: { children: ReactNode; dot?: boolean }) {
  return (
    <svg width="84" height="102" viewBox="0 0 84 102" className="shrink-0">
      {children}
      {dot && <circle cx="42" cy="94" r="4" fill="#a3a7b7" />}
    </svg>
  );
}

function Dock() {
  return (
    <nav className="absolute left-[346px] top-[1697px] flex h-[103px] w-[2188px] rounded-t-[11px] border-x-2 border-t-2 border-[#43474f] bg-[#181d2b] bg-[radial-gradient(circle_at_795px_100px,#484b51_0px,#2a2e38_120px,transparent_220px)] pl-1 shadow-[0_0_90px_rgba(0,0,0,0.14)]">
      <div className="-mt-px flex">
        {apps.map((a, i) => (
          <DockItem key={i} dot={a.dot}>{a.art}</DockItem>
        ))}
        <div className="flex w-[38px] justify-center pl-[3px] pt-[26px]"><span className="h-[50px] w-[2px] bg-[#4a505c]" /></div>
        <DockItem><Preview /></DockItem>
        <DockItem><Dictionary /></DockItem>
        <DockItem><Settings /></DockItem>
        <div className="flex w-[38px] justify-center pt-[14px]"><span className="h-[74px] w-[2px] bg-[#4a505c]" /></div>
        <DockItem><DocFile /></DockItem>
        <DockItem><Trash /></DockItem>
      </div>
    </nav>
  );
}

/* ---------- Desktop ---------- */

function Wallpaper() {
  return (
    <svg className="absolute left-0 top-0 h-[1800px] w-[2880px]" viewBox="0 0 2880 1800">
      <defs>
        <linearGradient id="sky" x1="0" y1="0" x2="0" y2="1">
          <stop offset="0" stopColor="#0a1730" />
          <stop offset="0.300" stopColor="#152740" />
          <stop offset="0.500" stopColor="#23364f" />
          <stop offset="0.800" stopColor="#35465c" />
          <stop offset="1" stopColor="#42536a" />
        </linearGradient>
        <linearGradient id="dune" x1="0" y1="0" x2="0" y2="1">
          <stop offset="0" stopColor="#22334f" />
          <stop offset="0.150" stopColor="#0f1b35" />
          <stop offset="0.350" stopColor="#080f20" />
          <stop offset="0.700" stopColor="#0a1122" />
          <stop offset="1" stopColor="#0d1528" />
        </linearGradient>
      </defs>
      <rect width="2880" height="830" fill="url(#sky)" />
      <path d="M2820 813 Q2850 811 2880 800 V1030 H2820Z" fill="#1e2032" />
      <path d="M2820 880 Q2850 870 2880 878 V1030 H2820Z" fill="#1a1e30" />
      <path d="M2820 936 L2880 945 V1040 H2820Z" fill="#141b30" />
      <path d="M0 1005 H2820 Q2850 1018 2880 1030 V1800 H0Z" fill="url(#dune)" />
      <rect x="2860" y="288" width="3" height="2" fill="#8b96a6" />
      <rect x="2859" y="408" width="2" height="2" fill="#7f8b9c" />
    </svg>
  );
}

export default function App() {
  return (
    <div className="relative h-[1800px] w-[2880px] overflow-hidden bg-[#0a1020] font-[Inter,'Noto_Sans_CJK_TC',sans-serif]">
      <Wallpaper />
      {/* desktop items partly covered by the window */}
      <div className="absolute left-[2836px] top-[684px] flex flex-col gap-[192px] text-[24px] font-semibold leading-8 text-[#c4c5c7]">
        <span>M</span>
        <span>M</span>
        <span>M</span>
        <span>M</span>
      </div>
      <div className="absolute left-[47px] top-[1640px] flex w-[119px] flex-col items-center gap-8">
        <div className="flex h-[84px] w-full flex-col justify-end gap-[6px] rounded-[3px] bg-[#3b5867] pb-[3px]">
          <span className="h-px w-full bg-[#4f7080]" />
          <span className="h-px w-full bg-[#4f7080]" />
        </div>
        <div className="pr-[3px] text-[24px] font-bold leading-8 text-[#e3e3e5]">Work</div>
      </div>
      <div className="absolute left-[2676px] top-[1640px] flex flex-col items-center">
        <div className="ml-[3px] h-[94px] w-[96px] border-[5px] border-[#a2a2a2] bg-[#565656] shadow-[inset_0_0_0_1px_#333]" />
        <div className="mt-[20px] text-[24px] font-semibold leading-8 tracking-[0.55px] text-[#e6e6e6]">yRjG7wfrJ.png</div>
      </div>
      <div className="relative">
        <MenuBar />
      </div>
      <BrowserWindow />
      <Dock />
    </div>
  );
}
